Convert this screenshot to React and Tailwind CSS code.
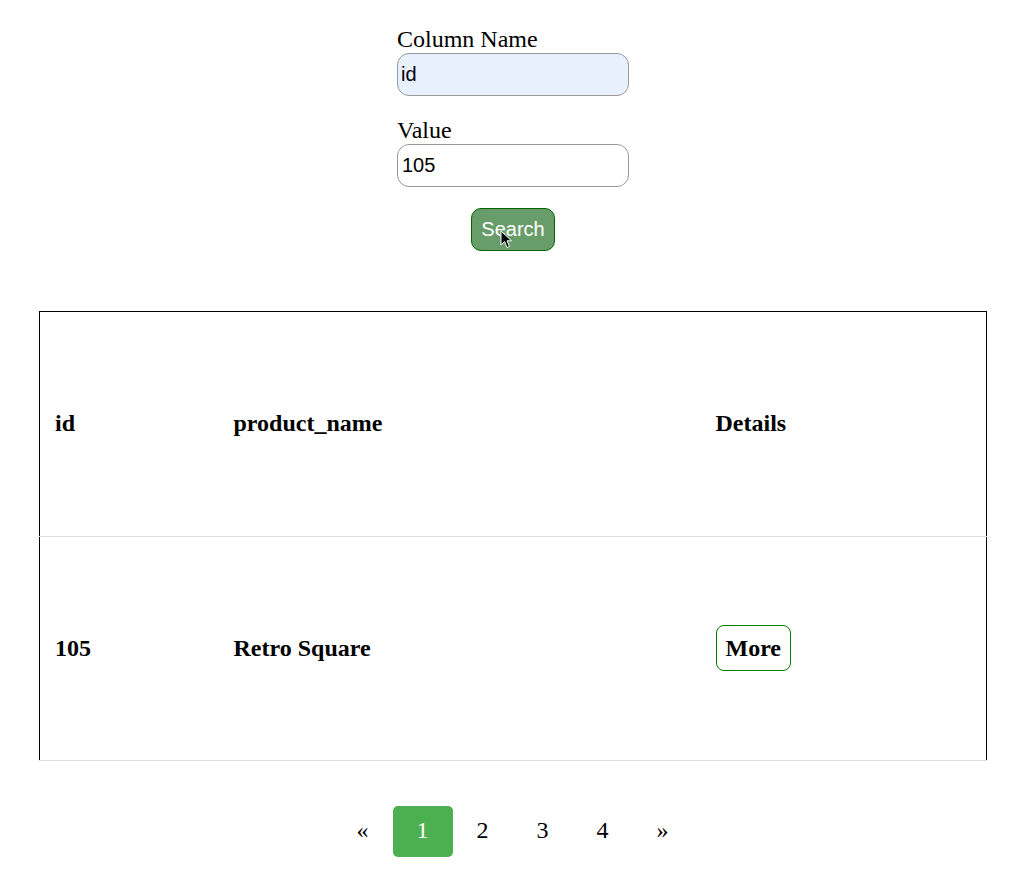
import React from "react";

const serif = { fontFamily: '"Liberation Serif", "Times New Roman", serif' };

function App() {
  const rows = [{ id: 105, product_name: "Retro Square" }];
  const pages = ["«", "1", "2", "3", "4", "»"];

  return (
    <div className="min-h-screen bg-white text-black" style={serif}>
      <div className="pt-[26px] flex justify-center">
        <div className="w-[232px] flex flex-col ml-[-3px]">
          <label className="text-[24px] leading-[27px]">Column Name</label>
          <input
            defaultValue="id"
            className="h-[43px] w-[232px] rounded-[12px] border border-[#999] bg-[#e8f0fe] pl-[3px] text-[20px] font-['Liberation_Sans',Arial,sans-serif] outline-none"
          />
          <label className="mt-[21px] text-[24px] leading-[27px]">Value</label>
          <input
            defaultValue="105"
            className="h-[43px] w-[232px] rounded-[12px] border border-[#999] bg-white pl-[4px] text-[20px] font-['Liberation_Sans',Arial,sans-serif] outline-none"
          />
          <div className="mt-[21px] flex justify-center">
            <button className="relative h-[43px] px-[9px] pb-[2px] rounded-[10px] border border-[#006400] bg-[#689d6a] text-white text-[20px] font-['Liberation_Sans',Arial,sans-serif]">
              Search
              <svg
                className="absolute left-[28px] top-[21px]"
                width="13"
                height="20"
                viewBox="0 0 13 20"
              >
                <path
                  d="M1 1 L1 15 L4.5 11.5 L7 17.5 L9.5 16.5 L7 10.8 L11.5 10.8 Z"
                  fill="black"
                  stroke="white"
                  strokeWidth="1"
                />
              </svg>
            </button>
          </div>
        </div>
      </div>

      <div className="mt-[60px] pl-[39px]">
        <table className="w-[948px] border-collapse border border-black">
          <thead>
            <tr className="h-[225px] border-b border-[#ddd]">
              <th className="w-[179px] pl-[15px] pb-[2px] text-left align-middle text-[24px] font-bold">id</th>
              <th className="w-[482px] pl-[15px] pb-[2px] text-left align-middle text-[24px] font-bold">product_name</th>
              <th className="pl-[15px] pb-[2px] text-left align-middle text-[24px] font-bold">Details</th>
            </tr>
          </thead>
          <tbody>
            {rows.map((r) => (
              <tr key={r.id} className="h-[224px] border-b border-[#ddd]">
                <td className="pl-[15px] pb-[2px] align-middle text-[24px] font-bold">{r.id}</td>
                <td className="pl-[15px] pb-[2px] align-middle text-[24px] font-bold">{r.product_name}</td>
                <td className="pl-[15px] pb-[2px] align-middle">
                  <button className="rounded-[8px] border border-[#008000] bg-white px-[9px] py-[8px] text-[24px] leading-[28px] font-bold">
                    More
                  </button>
                </td>
              </tr>
            ))}
          </tbody>
        </table>
      </div>

      <div className="mt-[45px] flex justify-center pr-[4px]">
        {pages.map((p) => (
          <a
            key={p}
            className={
              p === "1"
                ? "w-[60px] h-[51px] pb-[3px] flex items-center justify-center rounded-[5px] bg-[#4caf50] text-white text-[24px]"
                : "w-[60px] h-[51px] pb-[3px] flex items-center justify-center text-black text-[24px]"
            }
          >
            {p}
          </a>
        ))}
      </div>
    </div>
  );
}

export default App;
